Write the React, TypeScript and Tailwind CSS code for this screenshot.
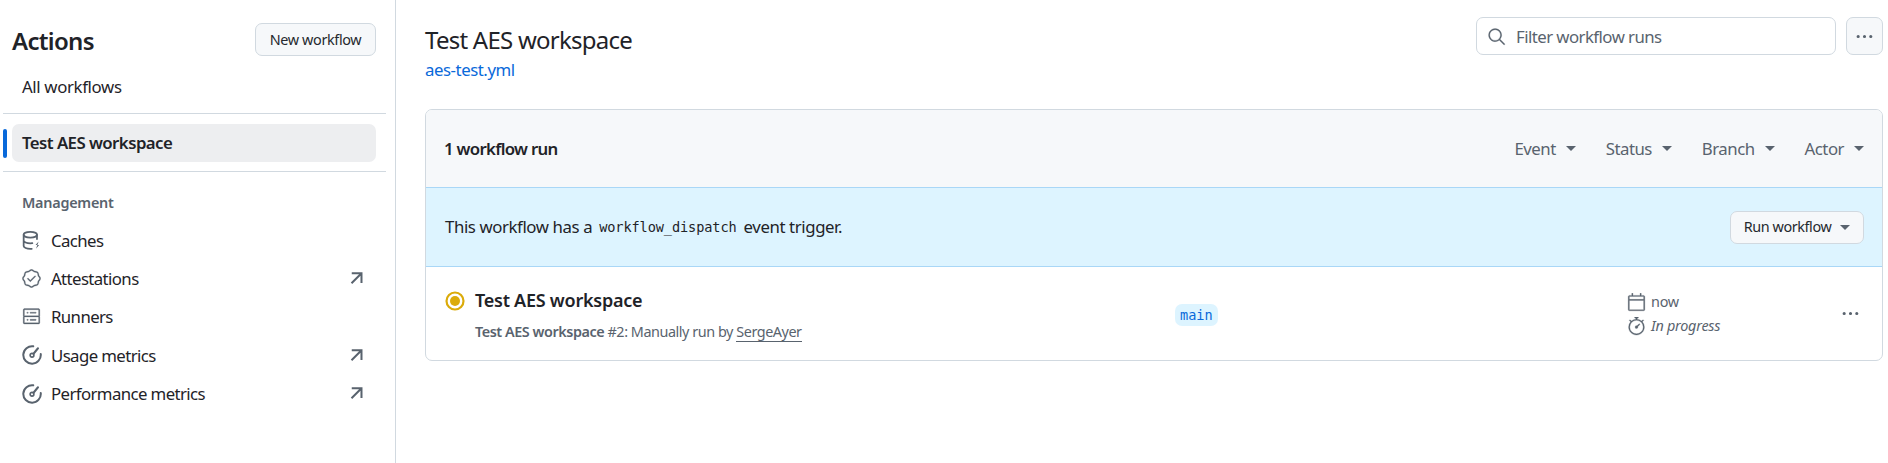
import { GoCalendar, GoKebabHorizontal, GoSearch, GoServer, GoStopwatch, GoVerified } from "react-icons/go";
import type { ReactNode } from "react";

const font = "font-['Noto_Sans',sans-serif]";
const mono = "font-['DejaVu_Sans_Mono','Liberation_Mono',monospace]";
const heavy = "stroke-current stroke-[0.35]";

const CacheIcon = () => (
  <svg width="19" height="19" viewBox="0 0 16 16" fill="none" stroke="currentColor" strokeWidth="1.5" strokeLinecap="round">
    <ellipse cx="7" cy="3.2" rx="5.6" ry="2.4" />
    <path d="M1.4 3.2v9.4c0 1.3 2.5 2.4 5.6 2.4h1.2M12.6 3.2v3.6M1.4 8c0 1.3 2.5 2.4 5.6 2.4 .6 0 1.2 0 1.7-.1" />
    <path d="M14 8.8l-2.6 3h3l-2.6 3.2z" fill="currentColor" stroke="none" />
  </svg>
);

const MeterIcon = () => (
  <svg width="20" height="20" viewBox="0 0 16 16" fill="none" stroke="currentColor" strokeWidth="1.6" strokeLinecap="round">
    <path d="M9 1A7 7 0 1 0 15 7.2" />
    <circle cx="8" cy="8.2" r="1.5" strokeWidth="1.3" />
    <path d="M9.2 7 12.8 2.6" />
  </svg>
);

const ExternalIcon = () => (
  <svg width="19" height="19" viewBox="0 0 16 16" fill="none" stroke="#59636e" strokeWidth="1.7">
    <path d="M4 3.6h8.2v8.2M12 3.8 3.8 12" />
  </svg>
);

const managementLinks = [
  { label: "Caches", icon: <CacheIcon />, external: false },
  { label: "Attestations", icon: <GoVerified size={19} className={heavy} />, external: true },
  { label: "Runners", icon: <GoServer size={19} className={heavy} />, external: false },
  { label: "Usage metrics", icon: <MeterIcon />, external: true },
  { label: "Performance metrics", icon: <MeterIcon />, external: true },
];

const Caret = ({ className = "" }: { className?: string }) => (
  <span className={`inline-block border-x-[5px] border-t-[5px] border-x-transparent border-t-current ${className}`} />
);

function Filter({ children }: { children: ReactNode }) {
  return (
    <span className="flex items-center gap-[10px] text-[#59636e]">
      {children}
      <Caret />
    </span>
  );
}

function Sidebar() {
  return (
    <aside className="w-[396px] shrink-0 border-r border-[#d1d9e0] pt-[23px] px-[3px]">
      <div className="flex items-center justify-between pl-[9px] pr-[16px]">
        <h1 className="translate-y-[1px] text-[24px] font-semibold leading-[33px] tracking-[-0.7px]">Actions</h1>
        <button className="h-[33px] w-[121px] rounded-[7px] border border-[#d1d9e0] bg-[#f6f8fa] text-[14.4px] text-[#25292e] tracking-[-0.35px]">
          New workflow
        </button>
      </div>
      <div className="mt-[12px] h-[38px] pl-[19px] flex items-center text-[16.8px] tracking-[-0.35px]">All workflows</div>
      <div className="mt-[7px] mr-[6px] border-t border-[#d1d9e0]" />
      <div className="relative mt-[10px] ml-[9px] mr-[16px] flex h-[38px] items-center rounded-[7px] bg-[#edeef0] pl-[10px] text-[16.8px] font-semibold tracking-[-0.55px]">
        Test AES workspace
        <span className="absolute -left-[9px] top-[5px] h-[29px] w-[4px] rounded-[3px] bg-[#0969da]" />
      </div>
      <div className="mt-[9px] mr-[6px] border-t border-[#d1d9e0]" />
      <div className="mt-[21px] pl-[19px] text-[14.4px] font-semibold leading-[20px] text-[#59636e] tracking-[-0.25px]">Management</div>
      <ul className="mt-[8px]">
        {managementLinks.map((link) => (
          <li key={link.label} className="flex h-[38.4px] items-center pl-[19px] pr-[26px] text-[16.8px] tracking-[-0.6px]">
            <span className="mr-[10px] w-[19px] text-[#59636e]">{link.icon}</span>
            <span className="flex-1">{link.label}</span>
            {link.external && <ExternalIcon />}
          </li>
        ))}
      </ul>
    </aside>
  );
}

export default function App() {
  return (
    <div className={`${font} flex h-[463px] w-[1888px] overflow-hidden bg-white text-[#1f2328]`}>
      <Sidebar />
      <main className="flex-1 pl-[29px] pr-[5px]">
        <div className="flex items-start justify-between pt-[17px]">
          <div className="pt-[5px]">
            <h2 className="text-[24px] leading-[36px] tracking-[-0.75px]">Test AES workspace</h2>
            <a className="block text-[16.8px] leading-[24px] tracking-[-0.45px] text-[#0969da]">aes-test.yml</a>
          </div>
          <div className="flex gap-[10px]">
            <div className="flex h-[38px] w-[360px] items-center rounded-[7px] border border-[#d1d9e0] pl-[10px] text-[16.8px] tracking-[-0.55px] text-[#59636e]">
              <GoSearch size={19} className={`mr-[10px] ${heavy}`} />
              <span className="translate-y-[1px]">Filter workflow runs</span>
            </div>
            <button className="flex h-[38px] w-[37px] items-center justify-center rounded-[7px] border border-[#d1d9e0] bg-[#f6f8fa] text-[#59636e]">
              <GoKebabHorizontal size={19} />
            </button>
          </div>
        </div>

        <section className="mt-[27px] overflow-hidden rounded-[7px] border border-[#d1d9e0]">
          <div className="flex h-[77px] items-center justify-between bg-[#f6f8fa] pl-[18px] pr-[18px] text-[16.8px] tracking-[-0.5px]">
            <span className="font-semibold tracking-[-0.7px]">1 workflow run</span>
            <div className="flex gap-[30px]">
              <Filter>Event</Filter>
              <Filter>Status</Filter>
              <Filter>Branch</Filter>
              <Filter>Actor</Filter>
            </div>
          </div>
          <div className="flex h-[80px] items-center justify-between border-y border-[#a9d7f7] bg-[#ddf4ff] pl-[19px] pr-[18px] text-[16.8px] tracking-[-0.4px]">
            <span className="flex items-center">
              This workflow has a
              <code className={`${mono} mx-[7px] text-[13.6px] tracking-[-0.1px]`}>workflow_dispatch</code>
              event trigger.
            </span>
            <button className="flex h-[33px] w-[134px] items-center justify-center gap-[9px] rounded-[7px] border border-[#d1d9e0] bg-[#f6f8fa] text-[14.4px] tracking-[-0.4px] text-[#25292e]">
              Run workflow
              <Caret className="text-[#59636e]" />
            </button>
          </div>
          <div className="flex h-[93px] items-center">
            <div className="flex w-[749px] shrink-0 items-start pl-[19px]">
              <svg width="20" height="20" viewBox="0 0 20 20" className="mr-[10px] mt-[6px] shrink-0">
                <circle cx="10" cy="10" r="8.5" fill="none" stroke="#dbab0a" strokeWidth="2.2" />
                <circle cx="10" cy="10" r="5" fill="#dbab0a" />
              </svg>
              <div>
                <div className="text-[18px] font-semibold leading-[31px] tracking-[-0.25px]">Test AES workspace</div>
                <div className="mt-[5px] text-[14.4px] leading-[22px] tracking-[-0.45px] text-[#59636e]">
                  <span className="font-semibold">Test AES workspace</span> #2: Manually run by{" "}
                  <span className="border-b border-[#59636e]">SergeAyer</span>
                </div>
              </div>
            </div>
            <div className="w-[452px] shrink-0">
              <span className={`${mono} inline-block rounded-[7px] bg-[#ddf4ff] px-[5px] py-[2px] text-[13.6px] leading-[18px] text-[#0969da]`}>
                main
              </span>
            </div>
            <div className="flex-1 pt-[1px] text-[14.4px] leading-[24px] tracking-[-0.25px] text-[#59636e]">
              <div className="flex items-center gap-[5px]"><GoCalendar size={19} className={heavy} />now</div>
              <div className="flex items-center gap-[5px] italic"><GoStopwatch size={19} className={heavy} />In progress</div>
            </div>
            <div className="pr-[22px] text-[#59636e]"><GoKebabHorizontal size={19} /></div>
          </div>
        </section>
      </main>
    </div>
  );
}
